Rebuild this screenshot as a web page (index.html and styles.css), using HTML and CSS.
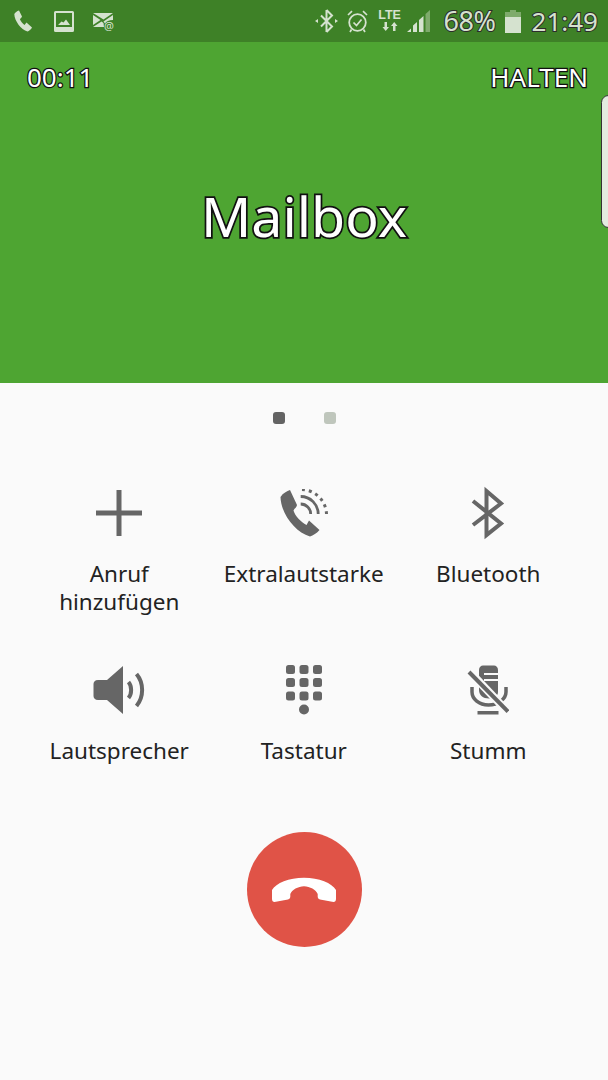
FILE: index.html
```html
<!DOCTYPE html>
<html lang="de">
<head>
<meta charset="utf-8">
<title>Mailbox</title>
<link rel="stylesheet" href="styles.css">
</head>
<body>
<div class="screen">
  <header class="status">
    <div class="status-left">
      <svg class="s-phone" viewBox="0 0 18 22"><path d="M0.300 4 C1 2.500 3 1 5 .5 L8 6.500 C7.500 8 6 8.500 6 9.500 C7 11.500 8.500 13.500 10.500 15 L12.500 12.500 L18 17.500 C17 19.500 15 21 13.500 21.500 C7 19.500 .5 11 .3 4Z"/></svg>
      <svg class="s-image" viewBox="0 0 20 21"><path fill-rule="evenodd" d="M1.500 0H18.500A1.500 1.500 0 0 1 20 1.500V19.500A1.500 1.500 0 0 1 18.500 21H1.500A1.500 1.500 0 0 1 0 19.500V1.500A1.500 1.500 0 0 1 1.500 0ZM2 2V16H18V2ZM4 14 L7.500 10.500 L9.500 11.500 L12 8.500 L16 14Z"/></svg>
      <svg class="s-mail" viewBox="0 0 22 19"><path d="M0 1 H20 L10.500 7.500Z"/><path d="M0 3 L7.500 8 L0 13Z"/><path d="M20 3 V8 C16 8 13 9.500 12 11.500 L10.500 9.500Z"/><path d="M0 15 L8.500 9.500 L10.500 11 L11 15Z"/><text class="mail-at" x="11" y="18">@</text></svg>
    </div>
    <div class="status-right">
      <svg class="s-bt" viewBox="0 0 23 24"><path d="M11.500 1 L17 6.500 L6 17.500 M11.500 23 L17 17.500 L6 6.500 M11.500 1 V23" fill="none" stroke="#d5e2cf" stroke-width="2"/><path d="M0 12 L3 10 V14Z M23 12 L20 10 V14Z"/></svg>
      <svg class="s-alarm" viewBox="0 0 21 23"><circle cx="10.500" cy="12.500" r="8.300" fill="none" stroke="#d5e2cf" stroke-width="1.800"/><path d="M6.500 12.500 L9.500 15.500 L14.500 9.500 M1 5 L5 1.200 M20 5 L16 1.200 M4.500 19.500 L3 22 M16.500 19.500 L18 22" fill="none" stroke="#d5e2cf" stroke-width="1.700"/></svg>
      <div class="s-lte">
        <span class="lte-text">LTE</span>
        <svg class="lte-arrows" viewBox="0 0 16 9"><path d="M2.500 0 H5 V5 H7 L3.700 9 L.5 5 H2.500Z M11 9 H13.500 V4 H15.500 L12.200 0 L9 4 H11Z"/></svg>
      </div>
      <svg class="s-signal" viewBox="0 0 24 22"><path d="M0 22 L4 18.500 V22Z M6 22 V15.500 L10 12 V22Z M12 22 V10 L16.500 6 V22Z"/><path class="dim" d="M18.500 22 V4 L23 0 V22Z"/></svg>
      <span class="s-percent">68%</span>
      <svg class="s-batt" viewBox="0 0 16 23"><path class="dim" d="M5 0 H11 V2 H16 V7 H0 V2 H5Z"/><path d="M0 7 H16 V23 H0Z"/></svg>
      <span class="s-time">21:49</span>
    </div>
  </header>

  <section class="call">
    <div class="call-top">
      <span class="outlined call-small">00:11</span>
      <span class="outlined call-small">HALTEN</span>
    </div>
    <h1 class="outlined call-name">Mailbox</h1>
  </section>

  <div class="edge-tab"></div>

  <main class="panel">
    <div class="dots"><span class="dot dot-on"></span><span class="dot"></span></div>
    <div class="actions">
      <div class="action">
        <div class="icon-box"><svg class="i-plus" viewBox="0 0 46 46"><path d="M20.500 0 H25.500 V20.500 H46 V25.500 H25.500 V46 H20.500 V25.500 H0 V20.500 H20.500Z"/></svg></div>
        <div class="label">Anruf<br>hinzufügen</div>
      </div>
      <div class="action">
        <div class="icon-box"><svg class="i-loud" viewBox="0 0 50 48"><path d="M0.500 8 C3 4 7 2 10 1 L17 16 C17 18 14 20 13.500 21.500 C15 27 21 33 26.500 36 L29 31.500 L39.500 41 C37 44 33 46.500 30 47.500 C15 43 1 25 .5 8Z"/><path d="M20.700 15 A10 10 0 0 1 30.700 25 M20.700 7.500 A17.500 17.500 0 0 1 38.200 25" fill="none" stroke="#666" stroke-width="2.800"/><path d="M22 .5 A25.500 25.500 0 0 1 46.500 25" fill="none" stroke="#666" stroke-width="3" stroke-dasharray="3 4"/></svg></div>
        <div class="label">Extralautstarke</div>
      </div>
      <div class="action">
        <div class="icon-box"><svg class="i-bt" viewBox="0 0 34 54"><path d="M2 15 L30 37.500 L15.500 49 V5 L30 17.500 L2 39" fill="none" stroke="#666" stroke-width="4"/></svg></div>
        <div class="label">Bluetooth</div>
      </div>
      <div class="action">
        <div class="icon-box"><svg class="i-speaker" viewBox="0 0 53 48"><path d="M30 0 V48 L14 34 H5 C2 34 .5 32 .5 30 V18 C.5 16 2 14 5 14 H14Z"/><path d="M35.500 16 C39 20 39 28 35.500 32 M43.500 8 C51 17 51 31 43.500 40" fill="none" stroke="#666" stroke-width="4"/></svg></div>
        <div class="label">Lautsprecher</div>
      </div>
      <div class="action">
        <div class="icon-box"><svg class="i-keypad" viewBox="0 0 36 50"><g><rect width="9" height="9" rx="2.500"/><rect x="13.500" width="9" height="9" rx="2.500"/><rect x="27" width="9" height="9" rx="2.500"/><rect y="13" width="9" height="9" rx="2.500"/><rect x="13.500" y="13" width="9" height="9" rx="2.500"/><rect x="27" y="13" width="9" height="9" rx="2.500"/><rect y="26.500" width="9" height="9" rx="2.500"/><rect x="13.500" y="26.500" width="9" height="9" rx="2.500"/><rect x="27" y="26.500" width="9" height="9" rx="2.500"/><circle cx="18" cy="44.500" r="5"/></g></svg></div>
        <div class="label">Tastatur</div>
      </div>
      <div class="action">
        <div class="icon-box"><svg class="i-mute" viewBox="0 0 42 50"><path d="M12 5 C12 2 14 .5 16 .5 H27 C29 .5 31 2 31 5 V8 H17 V10 H31 V14 H17 V16 H31 V27 C31 31 27 33.500 22 33.500 C16 33.500 12 30 12 25Z"/><path d="M5 22 V27 C5 34 12 40 21.500 40 C31 40 39 34 39 27 V22" fill="none" stroke="#666" stroke-width="3.500"/><rect x="10.500" y="46" width="21" height="3.500"/><path d="M2 6 L41 47" stroke="#fafafa" stroke-width="8"/><path d="M2 7 L41 46.500" stroke="#666" stroke-width="4"/></svg></div>
        <div class="label">Stumm</div>
      </div>
    </div>
    <div class="end-wrap">
      <div class="end-btn"><svg class="i-end" viewBox="0 0 64 25"><path d="M0 13 C4 6 17 .7 32 .7 C47 .7 60 6 64 13 V22 C64 24 63 25 61.500 25 L48 22.500 C46.500 22 45.700 21 45.700 19.500 V17 C44 13 38 9.300 32 9.300 C26 9.300 20 13 18.300 17 V19.500 C18.300 21 17.500 22 16 22.500 L2.500 25 C1 25 0 24 0 22Z"/></svg></div>
    </div>
  </main>
</div>
</body>
</html>
```

FILE: styles.css
```css
* { box-sizing: border-box; margin: 0; padding: 0; }
html, body { width: 608px; height: 1080px; overflow: hidden; }
body { font-family: "Noto Sans", "Liberation Sans", sans-serif; background: #fafafa; }
.screen { position: relative; width: 608px; height: 1080px; display: flex; flex-direction: column; }

.status { height: 42px; background: #3e8127; display: flex; justify-content: space-between; align-items: center; fill: #d5e2cf; }
.status-left, .status-right { display: flex; align-items: center; }
.status-left { padding-left: 14px; }
.status-right { padding-right: 10px; }
.status svg { display: block; flex: none; }
.s-phone { width: 18px; height: 22px; margin-right: 22px; }
.s-image { width: 20px; height: 21px; margin-right: 19px; }
.s-mail { width: 22px; height: 19px; overflow: visible; }
.mail-at { font-family: "Noto Sans", sans-serif; font-size: 11px; }
.s-bt { width: 23px; height: 24px; margin-right: 9px; }
.s-alarm { width: 21px; height: 23px; margin-right: 10px; }
.s-lte { width: 24px; margin-right: 5px; display: flex; flex-direction: column; align-items: center; margin-top: -2px; }
.lte-text { font: 700 12.5px/12px "Liberation Sans", sans-serif; color: #d5e2cf; }
.status svg.lte-arrows { width: 16px; height: 9px; margin-top: 1px; }
.s-signal { width: 24px; height: 22px; margin-right: 13px; }
.dim { fill: #7fab6c; }
.s-percent, .s-time { font-size: 27px; line-height: 42px; color: #d5e2cf; paint-order: stroke fill; -webkit-text-stroke: 2px #2c2c2c; white-space: nowrap; }
.s-percent { width: 55px; margin-right: 6px; letter-spacing: -.5px; }
.s-batt { width: 16px; height: 23px; margin-right: 11px; }
.s-time { font-size: 26px; }

.call { height: 341px; background: #4ea532; display: flex; flex-direction: column; padding: 17px 20px 0 27px; }
.call-top { display: flex; justify-content: space-between; }
.outlined { color: #fff; paint-order: stroke fill; -webkit-text-stroke: 2.5px #111; }
.call-small { font-size: 26px; line-height: 36px; }
.call-name { font-size: 55.5px; font-weight: 400; line-height: 80px; text-align: center; margin: 81px -20px 0 -27px; -webkit-text-stroke-width: 3.5px; }

.edge-tab { position: absolute; right: -8px; top: 95px; width: 15px; height: 133px; background: #e3ecdf; border: 1px solid #333; border-radius: 9px; }

.panel { flex: 1; display: flex; flex-direction: column; }
.dots { display: flex; justify-content: center; gap: 39px; padding-top: 29px; margin-left: 1px; }
.dot { width: 12px; height: 12px; border-radius: 3px; background: #bfc6bc; }
.dot-on { background: #636363; }

.actions { display: grid; grid-template-columns: repeat(3, 184.5px); grid-auto-rows: 177px; padding: 54px 0 0 27px; }
.action { display: flex; flex-direction: column; align-items: center; }
.icon-box { height: 70px; display: flex; align-items: center; justify-content: center; fill: #666; margin-bottom: 12px; }
.icon-box svg { display: block; }
.i-plus { width: 46px; height: 46px; }
.i-loud { width: 50px; height: 48px; margin-left: 2px; }
.i-bt { width: 34px; height: 54px; }
.i-speaker { width: 53px; height: 48px; }
.i-keypad { width: 36px; height: 50px; }
.i-mute { width: 42px; height: 50px; }
.label { font-size: 22.5px; line-height: 28px; color: #222; text-align: center; white-space: nowrap; }

.end-wrap { display: flex; justify-content: center; }
.end-btn { width: 115px; height: 115px; border-radius: 50%; background: #e05347; display: flex; align-items: center; justify-content: center; }
.i-end { width: 64px; height: 25px; fill: #fff; display: block; }
```
